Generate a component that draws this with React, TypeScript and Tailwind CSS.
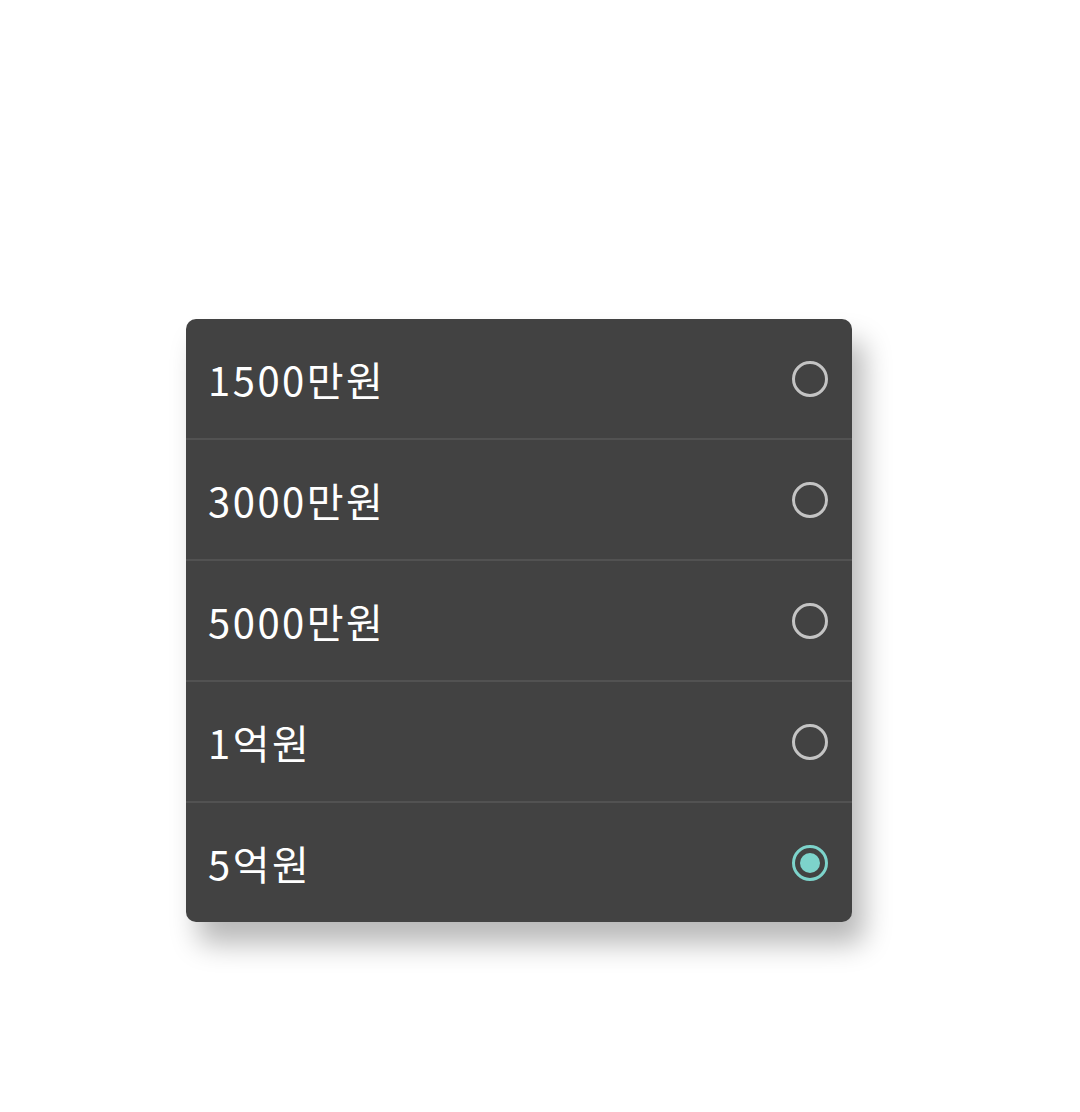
import React, { useState } from 'react';

const options = ['1500만원', '3000만원', '5000만원', '1억원', '5억원'];

const Radio: React.FC<{ checked: boolean }> = ({ checked }) => (
  <span
    className={`w-[36px] h-[36px] rounded-full border-[3px] flex items-center justify-center ${
      checked ? 'border-[#7dd3cb]' : 'border-[#c4c4c4]'
    }`}
  >
    {checked && <span className="w-[20px] h-[20px] rounded-full bg-[#7dd3cb]" />}
  </span>
);

export default function App() {
  const [selected, setSelected] = useState(4);

  return (
    <div className="w-[1080px] h-[1112px] bg-white pt-[319px] pl-[186px]" style={{ fontFamily: '"Noto Sans CJK KR", "Noto Sans", sans-serif' }}>
      <div className="w-[666px] rounded-[10px] bg-[#424242] overflow-hidden shadow-[12px_22px_28px_rgba(0,0,0,0.28)]">
        {options.map((label, i) => (
          <div
            key={label}
            onClick={() => setSelected(i)}
            className={`h-[119px] flex items-center justify-between pl-[22px] pr-[24px] cursor-pointer ${
              i > 0 ? 'border-t-2 border-[#525252] h-[121px]' : ''
            }`}
          >
            <span className="text-[40px] text-white tracking-[2.5px] leading-none">{label}</span>
            <Radio checked={selected === i} />
          </div>
        ))}
      </div>
    </div>
  );
}
